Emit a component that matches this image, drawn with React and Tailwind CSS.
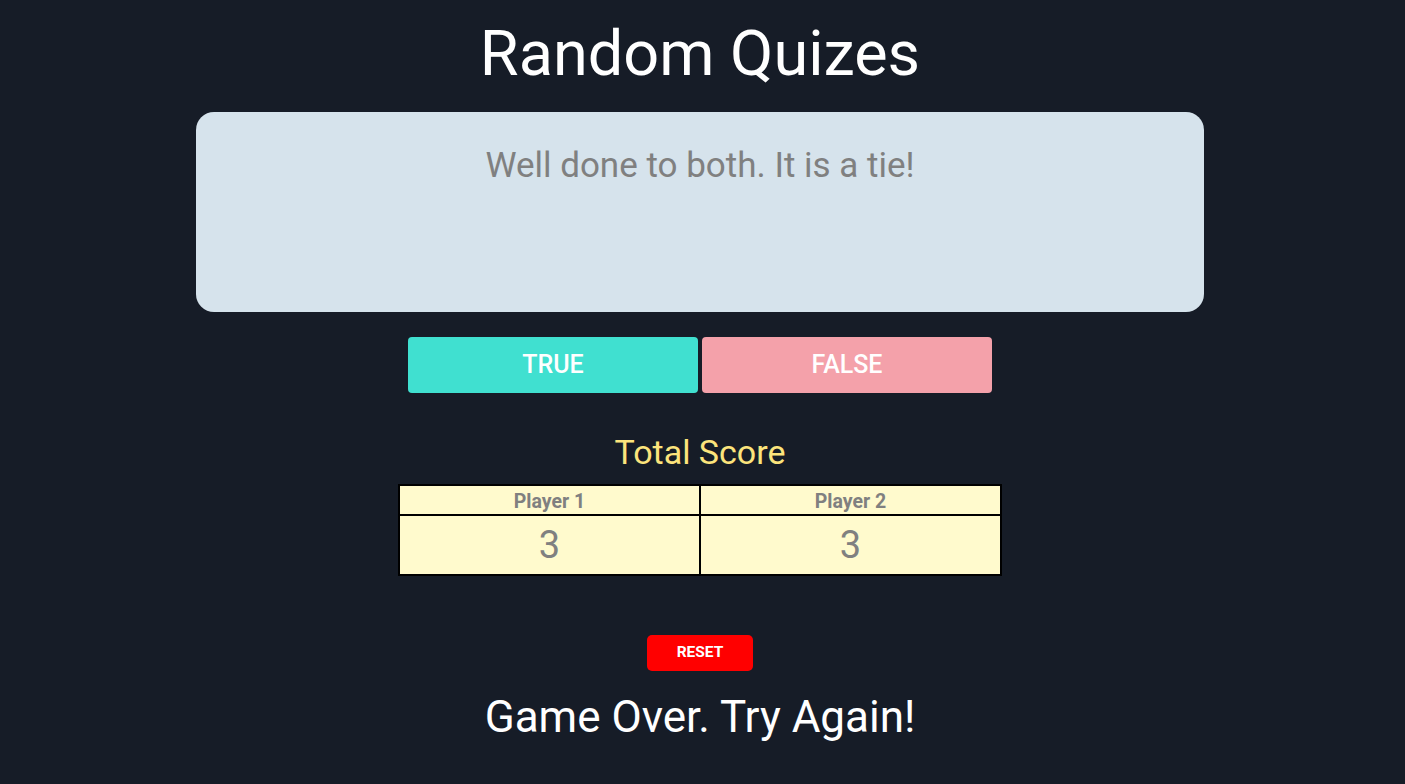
import { useState } from 'react'

export default function App() {
  const [scores] = useState([3, 3])

  return (
    <div className="min-h-screen bg-[#161c27] text-white flex flex-col items-center pr-[5px] font-['Roboto',sans-serif]">
      <h1 className="text-[63px] leading-none mt-[22px] mb-[27px]">Random Quizes</h1>

      <div className="w-[1008px] h-[200px] bg-[#d6e3ec] rounded-[18px] pt-[36px] text-center">
        <p className="text-[35px] leading-none text-[#808080]">Well done to both. It is a tie!</p>
      </div>

      <div className="flex gap-1 mt-[25px]">
        <button className="w-[290px] h-[56px] rounded bg-[#40e0d0] text-white text-[25px] font-medium">TRUE</button>
        <button className="w-[290px] h-[56px] rounded bg-[#f4a1aa] text-white text-[25px] font-medium">FALSE</button>
      </div>

      <h2 className="text-[34px] leading-none text-[#fce47c] mt-[42px] mb-[15px]">Total Score</h2>

      <table className="w-[604px] border-collapse bg-[#fffacd] text-[#808080]">
        <thead>
          <tr>
            <th className="border-2 border-black h-[30px] pt-[3px] text-[19.5px] leading-none font-bold">Player 1</th>
            <th className="border-2 border-black h-[30px] pt-[3px] text-[19.5px] leading-none font-bold">Player 2</th>
          </tr>
        </thead>
        <tbody>
          <tr>
            {scores.map((s, i) => (
              <td key={i} className="border-2 border-black h-[60px] text-[38px] text-center">{s}</td>
            ))}
          </tr>
        </tbody>
      </table>

      <button className="mt-[59px] w-[106px] h-[36px] rounded-[5px] bg-[#ff0000] text-white text-[15.5px] font-bold">RESET</button>

      <p className="text-[44px] leading-none mt-[24px]">Game Over. Try Again!</p>
    </div>
  )
}
